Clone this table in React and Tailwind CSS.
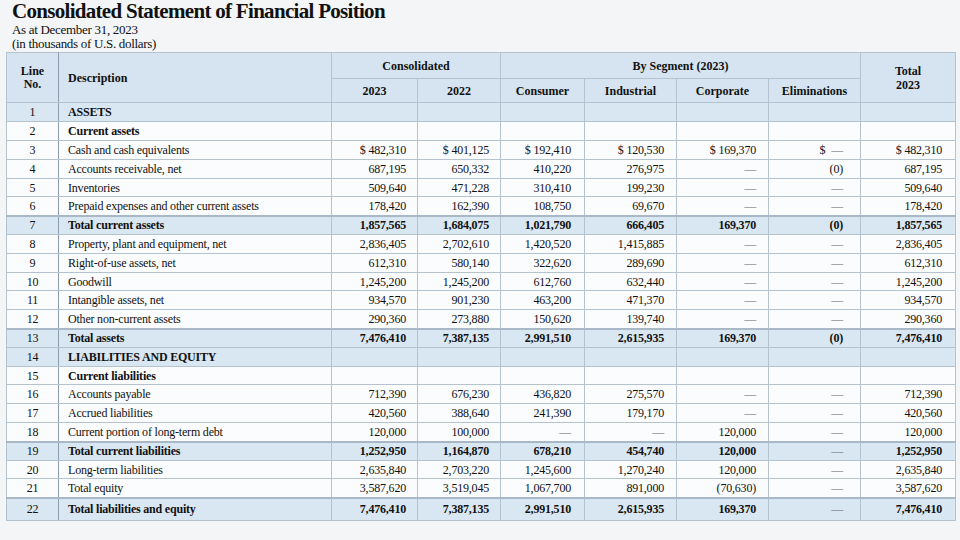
import React from "react";

const rows = [
  { n: 1, d: "ASSETS", type: "section" },
  { n: 2, d: "Current assets", type: "sub" },
  { n: 3, d: "Cash and cash equivalents", v: ["$ 482,310", "$ 401,125", "$ 192,410", "$ 120,530", "$ 169,370", "$ —", "$ 482,310"] },
  { n: 4, d: "Accounts receivable, net", v: ["687,195", "650,332", "410,220", "276,975", "—", "(0)", "687,195"] },
  { n: 5, d: "Inventories", v: ["509,640", "471,228", "310,410", "199,230", "—", "—", "509,640"] },
  { n: 6, d: "Prepaid expenses and other current assets", v: ["178,420", "162,390", "108,750", "69,670", "—", "—", "178,420"] },
  { n: 7, d: "Total current assets", type: "total", v: ["1,857,565", "1,684,075", "1,021,790", "666,405", "169,370", "(0)", "1,857,565"] },
  { n: 8, d: "Property, plant and equipment, net", v: ["2,836,405", "2,702,610", "1,420,520", "1,415,885", "—", "—", "2,836,405"] },
  { n: 9, d: "Right-of-use assets, net", v: ["612,310", "580,140", "322,620", "289,690", "—", "—", "612,310"] },
  { n: 10, d: "Goodwill", v: ["1,245,200", "1,245,200", "612,760", "632,440", "—", "—", "1,245,200"] },
  { n: 11, d: "Intangible assets, net", v: ["934,570", "901,230", "463,200", "471,370", "—", "—", "934,570"] },
  { n: 12, d: "Other non-current assets", v: ["290,360", "273,880", "150,620", "139,740", "—", "—", "290,360"] },
  { n: 13, d: "Total assets", type: "total", v: ["7,476,410", "7,387,135", "2,991,510", "2,615,935", "169,370", "(0)", "7,476,410"] },
  { n: 14, d: "LIABILITIES AND EQUITY", type: "section" },
  { n: 15, d: "Current liabilities", type: "sub" },
  { n: 16, d: "Accounts payable", v: ["712,390", "676,230", "436,820", "275,570", "—", "—", "712,390"] },
  { n: 17, d: "Accrued liabilities", v: ["420,560", "388,640", "241,390", "179,170", "—", "—", "420,560"] },
  { n: 18, d: "Current portion of long-term debt", v: ["120,000", "100,000", "—", "—", "120,000", "—", "120,000"] },
  { n: 19, d: "Total current liabilities", type: "total", v: ["1,252,950", "1,164,870", "678,210", "454,740", "120,000", "—", "1,252,950"] },
  { n: 20, d: "Long-term liabilities", v: ["2,635,840", "2,703,220", "1,245,600", "1,270,240", "120,000", "—", "2,635,840"] },
  { n: 21, d: "Total equity", v: ["3,587,620", "3,519,045", "1,067,700", "891,000", "(70,630)", "—", "3,587,620"] },
  { n: 22, d: "Total liabilities and equity", type: "total", last: true, v: ["7,476,410", "7,387,135", "2,991,510", "2,615,935", "169,370", "—", "7,476,410"] },
];

const numPad = ["pr-[11px]", "pr-[11px]", "pr-[13px]", "pr-[12px]", "pr-[12px]", "pr-[17px]", "pr-[13px]"];

function rowHeight(n) {
  if (n === 22) return "h-[23px]";
  if (n === 5 || n === 10 || n === 15 || n === 20) return "h-[18px]";
  return "h-[19px]";
}

function Val({ v }) {
  if (!v) return null;
  if (v === "—") return <span className="text-[#666] font-normal">—</span>;
  if (v === "$ —")
    return (
      <span>
        $<span className="inline-block w-[6px]" />
        <span className="text-[#666]">—</span>
      </span>
    );
  return v;
}

export default function App() {
  return (
    <div
      className="w-[960px] h-[540px] bg-[#f3f5f7] text-[#111] overflow-hidden"
      style={{ fontFamily: '"Liberation Serif", "Times New Roman", serif' }}
    >
      <div className="pl-[12px]">
        <h1 className="text-[21px] font-bold leading-[23px] tracking-[-0.7px]">
          Consolidated Statement of Financial Position
        </h1>
        <div className="text-[13px] leading-[14px] tracking-[-0.3px]">As at December 31, 2023</div>
        <div className="text-[13px] leading-[14px] tracking-[-0.3px]">(in thousands of U.S. dollars)</div>
      </div>
      <table className="ml-[6px] mt-[1px] w-[949px] table-fixed border-collapse border border-[#93a5b6] text-[12px] tracking-[-0.2px]">
        <colgroup>
          <col className="w-[52px]" />
          <col className="w-[273px]" />
          <col className="w-[86px]" />
          <col className="w-[83px]" />
          <col className="w-[84px]" />
          <col className="w-[92px]" />
          <col className="w-[92px]" />
          <col className="w-[92px]" />
          <col className="w-[95px]" />
        </colgroup>
        <thead>
          <tr className="h-[26px] bg-[#d5e4f0] font-bold">
            <th rowSpan={2} className="border border-[#b5c3cf] border-r-[#8a9cae] text-center leading-[13px] font-bold tracking-normal">
              Line
              <br />
              No.
            </th>
            <th rowSpan={2} className="border border-[#b5c3cf] text-left pl-[9px] font-bold tracking-normal">
              Description
            </th>
            <th colSpan={2} className="border border-[#b5c3cf] text-center font-bold tracking-normal">
              Consolidated
            </th>
            <th colSpan={4} className="border border-[#b5c3cf] text-center font-bold tracking-normal">
              By Segment (2023)
            </th>
            <th rowSpan={2} className="border border-[#b5c3cf] text-center leading-[14px] font-bold tracking-normal">
              Total
              <br />
              2023
            </th>
          </tr>
          <tr className="h-[24px] bg-[#d5e4f0]">
            {["2023", "2022", "Consumer", "Industrial", "Corporate", "Eliminations"].map((h) => (
              <th key={h} className="border border-[#b5c3cf] text-center font-bold tracking-normal">
                {h}
              </th>
            ))}
          </tr>
        </thead>
        <tbody>
          {rows.map((r) => {
            const blue = r.type === "total" || r.type === "section";
            const bold = r.type !== undefined;
            const topB = r.type === "total" ? "border-t-2 border-t-[#a9b8c6]" : "";
            return (
              <tr key={r.n} className={`${rowHeight(r.n)} ${blue ? "bg-[#d9e7f2]" : "bg-[#fbfcfd]"} ${bold ? "font-bold" : ""}`}>
                <td className={`border border-[#b5c3cf] border-r-[#8a9cae] text-center p-0 leading-none font-normal ${topB}`}>
                  {r.n}
                </td>
                <td className={`border border-[#b5c3cf] pl-[9px] p-0 leading-none ${topB}`}>{r.d}</td>
                {Array.from({ length: 7 }).map((_, i) => (
                  <td key={i} className={`border border-[#b5c3cf] text-right p-0 leading-none ${numPad[i]} ${topB}`}>
                    <Val v={r.v ? r.v[i] : null} />
                  </td>
                ))}
              </tr>
            );
          })}
        </tbody>
      </table>
    </div>
  );
}
